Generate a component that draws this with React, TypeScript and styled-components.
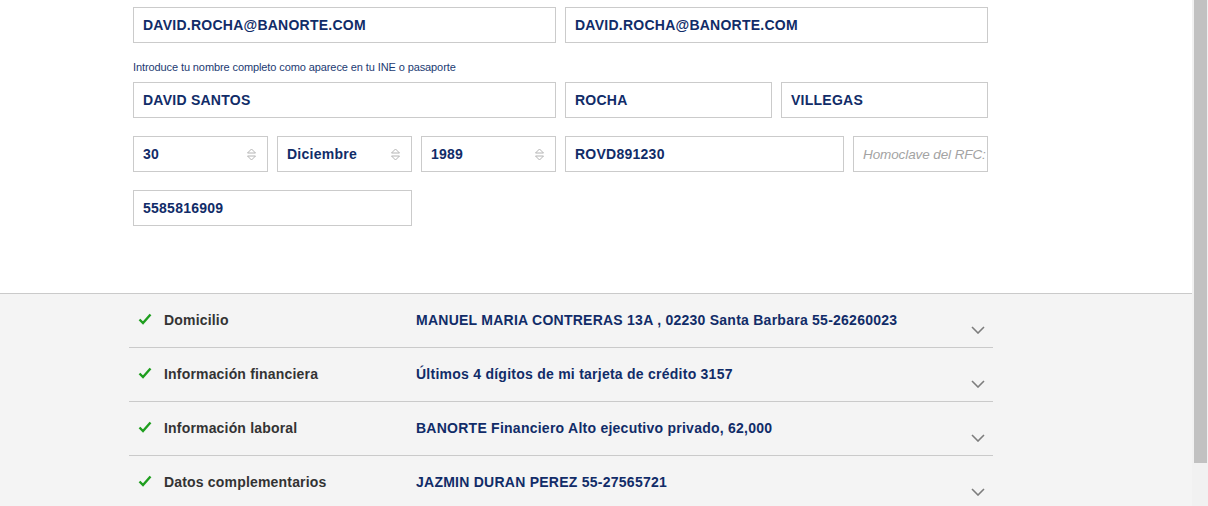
import React from "react";
import styled, { createGlobalStyle } from "styled-components";

const GlobalStyle = createGlobalStyle`
  html, body {
    margin: 0;
    padding: 0;
    overflow: hidden;
  }
  body {
    font-family: "Liberation Sans", Arial, sans-serif;
    background: #fff;
  }
`;

const Window = styled.div`
  display: flex;
  height: 506px;
  overflow: hidden;
`;

const Page = styled.div`
  flex: 1;
  min-width: 0;
  overflow: hidden;
`;

const ScrollTrack = styled.div`
  width: 16px;
  flex-shrink: 0;
  background: #f1f1f1;
  box-sizing: border-box;
  padding: 0 1px 0 2px;
`;

const ScrollThumb = styled.div`
  height: 463px;
  background: #c1c1c1;
`;

const FormArea = styled.div`
  width: 855px;
  margin-left: 133px;
  padding: 7px 0 67px;
`;

const Grid = styled.div`
  display: grid;
  grid-template-columns: repeat(12, 63px);
  column-gap: 9px;
  row-gap: 18px;
`;

const Field = styled.div<{ $span: number }>`
  grid-column: span ${(p) => p.$span};
  height: 36px;
  box-sizing: border-box;
  border: 1px solid #cbcbcb;
  background: #fff;
  display: flex;
  align-items: center;
  justify-content: space-between;
  padding: 0 10px 0 9px;
  font-size: 14px;
  font-weight: bold;
  letter-spacing: 0.25px;
  color: #112c68;
  white-space: nowrap;
  overflow: hidden;
`;

const Placeholder = styled.span`
  font-weight: normal;
  font-style: italic;
  font-size: 13.5px;
  letter-spacing: -0.1px;
  margin-right: -8px;
  color: #a3a3a3;
`;

const Helper = styled.p`
  margin: 17px 0 8px;
  font-size: 11px;
  line-height: 14px;
  letter-spacing: -0.1px;
  color: #1c3a72;
`;

const Summary = styled.section`
  border-top: 1px solid #cacaca;
  background: #f4f4f4;
  padding-bottom: 44px;
`;

const List = styled.div`
  width: 864px;
  margin-left: 129px;
`;

const Row = styled.div`
  display: grid;
  grid-template-columns: 26px 252px 1fr 14px;
  height: 54px;
  box-sizing: border-box;
  padding: 0 8px 0 9px;
  border-bottom: 1px solid #cacaca;
  font-size: 14px;
  font-weight: bold;
  line-height: 16px;
`;

const Check = styled.div`
  padding-top: 18px;
`;

const Label = styled.div`
  padding-top: 18px;
  color: #333;
  letter-spacing: 0.18px;
`;

const Value = styled.div`
  padding-top: 18px;
  color: #112c68;
  letter-spacing: 0.25px;
  white-space: nowrap;
`;

const Chevron = styled.div`
  padding-top: 27px;
`;

const SpinArrows = () => (
  <svg width="11" height="15" viewBox="0 0 11 15">
    <path d="M1.5 6 L5.5 2 L9.5 6 Z" fill="none" stroke="#b4b4b4" strokeWidth="1" />
    <path d="M1.5 9 L5.5 13 L9.5 9 Z" fill="none" stroke="#b4b4b4" strokeWidth="1" />
  </svg>
);

const CheckIcon = () => (
  <svg width="14" height="12" viewBox="0 0 14 12">
    <path d="M1.5 6.5 L5 10 L12.5 1.5" fill="none" stroke="#1e9e1e" strokeWidth="2.4" />
  </svg>
);

const ChevronIcon = () => (
  <svg width="14" height="8" viewBox="0 0 14 8">
    <path d="M1 1 L7 7 L13 1" fill="none" stroke="#7d7d7d" strokeWidth="1.6" />
  </svg>
);

const summary = [
  ["Domicilio", "MANUEL MARIA CONTRERAS 13A , 02230 Santa Barbara 55-26260023"],
  ["Información financiera", "Últimos 4 dígitos de mi tarjeta de crédito 3157"],
  ["Información laboral", "BANORTE Financiero Alto ejecutivo privado, 62,000"],
  ["Datos complementarios", "JAZMIN DURAN PEREZ 55-27565721"],
];

export default function App() {
  return (
    <Window>
      <GlobalStyle />
      <Page>
        <FormArea>
          <Grid>
            <Field $span={6}>DAVID.ROCHA@BANORTE.COM</Field>
            <Field $span={6}>DAVID.ROCHA@BANORTE.COM</Field>
          </Grid>
          <Helper>Introduce tu nombre completo como aparece en tu INE o pasaporte</Helper>
          <Grid>
            <Field $span={6}>DAVID SANTOS</Field>
            <Field $span={3}>ROCHA</Field>
            <Field $span={3}>VILLEGAS</Field>
            <Field $span={2}>
              30
              <SpinArrows />
            </Field>
            <Field $span={2}>
              Diciembre
              <SpinArrows />
            </Field>
            <Field $span={2}>
              1989
              <SpinArrows />
            </Field>
            <Field $span={4}>ROVD891230</Field>
            <Field $span={2}>
              <Placeholder>Homoclave del RFC:</Placeholder>
            </Field>
            <Field $span={4}>5585816909</Field>
          </Grid>
        </FormArea>
        <Summary>
          <List>
            {summary.map(([label, value]) => (
              <Row key={label}>
                <Check>
                  <CheckIcon />
                </Check>
                <Label>{label}</Label>
                <Value>{value}</Value>
                <Chevron>
                  <ChevronIcon />
                </Chevron>
              </Row>
            ))}
          </List>
        </Summary>
      </Page>
      <ScrollTrack>
        <ScrollThumb />
      </ScrollTrack>
    </Window>
  );
}
